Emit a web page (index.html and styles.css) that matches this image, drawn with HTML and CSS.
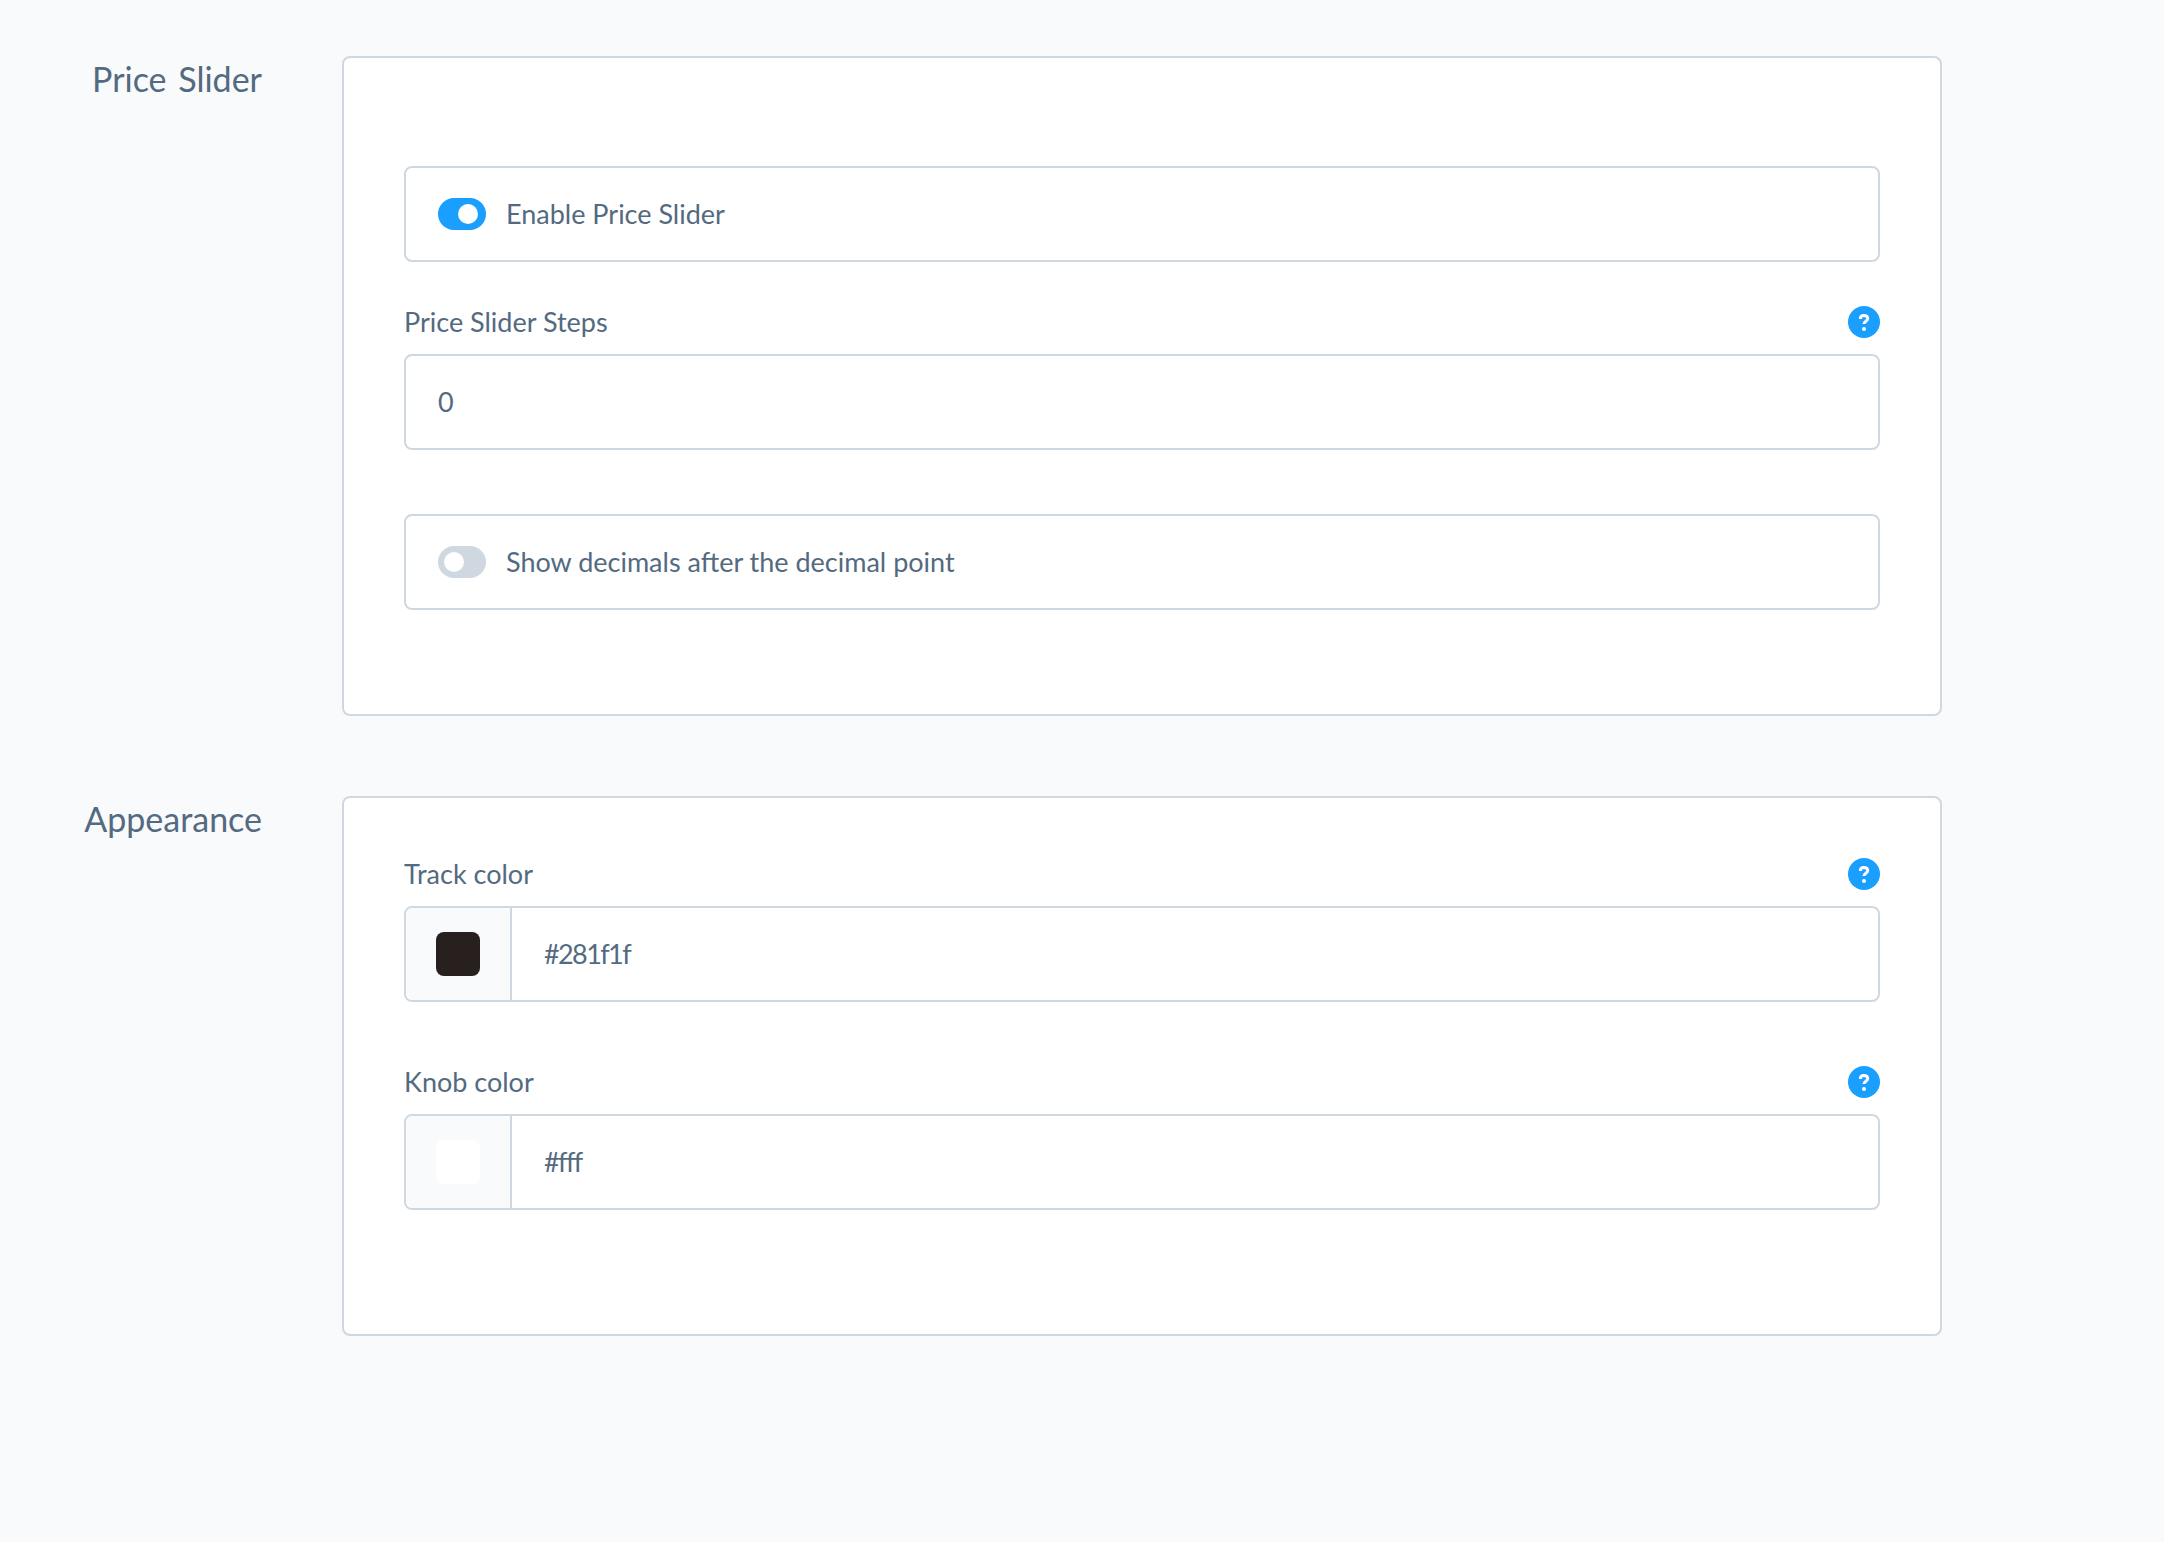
FILE: index.html
```html
<!DOCTYPE html>
<html lang="en">
  <head>
    <meta charset="UTF-8" />
    <meta name="viewport" content="width=device-width, initial-scale=1.0" />
    <title>Price Slider settings</title>
    <link rel="stylesheet" href="styles.css">
  </head>
  <body>
    <section class="group">
      <h2 class="group-title">Price Slider</h2>
      <div class="card card-slider">
        <label class="box">
          <span class="toggle on"></span>
          <span>Enable Price Slider</span>
        </label>
        <div class="field">
          <div class="field-head">
            <span>Price Slider Steps</span>
            <svg class="help" viewBox="0 0 32 32"><circle cx="16" cy="16" r="16" fill="#1a9fff" /><path d="M12.3 13c0-2.4 1.6-3.6 3.7-3.6s3.7 1.2 3.7 3.2c0 2.6-3.7 2.6-3.7 5.4" fill="none" stroke="#fff" stroke-width="3" /><circle cx="16" cy="23" r="2" fill="#fff" /></svg>
          </div>
          <div class="box"><span>0</span></div>
        </div>
        <label class="box box-decimals">
          <span class="toggle"></span>
          <span>Show decimals after the decimal point</span>
        </label>
      </div>
    </section>

    <section class="group">
      <h2 class="group-title">Appearance</h2>
      <div class="card card-appearance">
        <div class="field">
          <div class="field-head">
            <span>Track color</span>
            <svg class="help" viewBox="0 0 32 32"><circle cx="16" cy="16" r="16" fill="#1a9fff" /><path d="M12.3 13c0-2.4 1.6-3.6 3.7-3.6s3.7 1.2 3.7 3.2c0 2.6-3.7 2.6-3.7 5.4" fill="none" stroke="#fff" stroke-width="3" /><circle cx="16" cy="23" r="2" fill="#fff" /></svg>
          </div>
          <div class="box box-color">
            <div class="addon"><span class="swatch swatch-track"></span></div>
            <span class="color-value">#281f1f</span>
          </div>
        </div>
        <div class="field field-knob">
          <div class="field-head">
            <span>Knob color</span>
            <svg class="help" viewBox="0 0 32 32"><circle cx="16" cy="16" r="16" fill="#1a9fff" /><path d="M12.3 13c0-2.4 1.6-3.6 3.7-3.6s3.7 1.2 3.7 3.2c0 2.6-3.7 2.6-3.7 5.4" fill="none" stroke="#fff" stroke-width="3" /><circle cx="16" cy="23" r="2" fill="#fff" /></svg>
          </div>
          <div class="box box-color">
            <div class="addon"><span class="swatch swatch-knob"></span></div>
            <span class="color-value">#fff</span>
          </div>
        </div>
      </div>
    </section>
  </body>
</html>
```

FILE: styles.css
```css
body {
  margin: 0;
  min-height: 1542px;
  padding-top: 56px;
  box-sizing: border-box;
  background-color: #f9fafc;
  color: #536a80;
  font-family: "Lato", "Noto Sans", sans-serif;
  font-size: 27px;
}
.group {
  display: flex;
  align-items: flex-start;
  margin-bottom: 80px;
}
.group-title {
  width: 262px;
  margin: 0 80px 0 0;
  text-align: right;
  font-size: 34px;
  font-weight: 400;
  line-height: 46px;
  word-spacing: 3px;
}
.card {
  width: 1600px;
  box-sizing: border-box;
  padding: 0 60px;
  background-color: #fff;
  border: 2px solid #cfd8e0;
  border-radius: 8px;
}
.card-slider {
  height: 660px;
  padding-top: 108px;
}
.card-appearance {
  height: 540px;
  padding-top: 60px;
}
.box {
  display: flex;
  align-items: center;
  height: 96px;
  box-sizing: border-box;
  padding: 0 32px;
  background-color: #fff;
  border: 2px solid #cfd8e0;
  border-radius: 8px;
}
.box > span:last-child,
.field-head > span {
  margin-bottom: 2px;
}
.box-decimals {
  margin-top: 64px;
}
.field {
  margin-top: 44px;
}
.card-appearance .field {
  margin-top: 0;
}
.card-appearance .field-knob {
  margin-top: 64px;
}
.field-head {
  display: flex;
  justify-content: space-between;
  align-items: center;
  height: 32px;
  margin-bottom: 16px;
}
.help {
  width: 32px;
  height: 32px;
}
.toggle {
  position: relative;
  width: 48px;
  height: 32px;
  margin-right: 20px;
  border-radius: 16px;
  background-color: #cfd8e0;
}
.toggle::after {
  content: "";
  position: absolute;
  top: 6px;
  left: 6px;
  width: 20px;
  height: 20px;
  border-radius: 50%;
  background-color: #fff;
}
.toggle.on {
  background-color: #1a9fff;
}
.toggle.on::after {
  left: 20px;
}
.box-color {
  padding: 0;
}
.addon {
  display: flex;
  align-items: center;
  justify-content: center;
  width: 104px;
  height: 100%;
  background-color: #f9fafc;
  border-right: 2px solid #cfd8e0;
  border-radius: 6px 0 0 6px;
}
.swatch {
  width: 44px;
  height: 44px;
  border-radius: 8px;
}
.swatch-track {
  background-color: #281f1f;
}
.swatch-knob {
  background-color: #fff;
}
.color-value {
  margin-left: 32px;
  letter-spacing: -1.6px;
}
```
